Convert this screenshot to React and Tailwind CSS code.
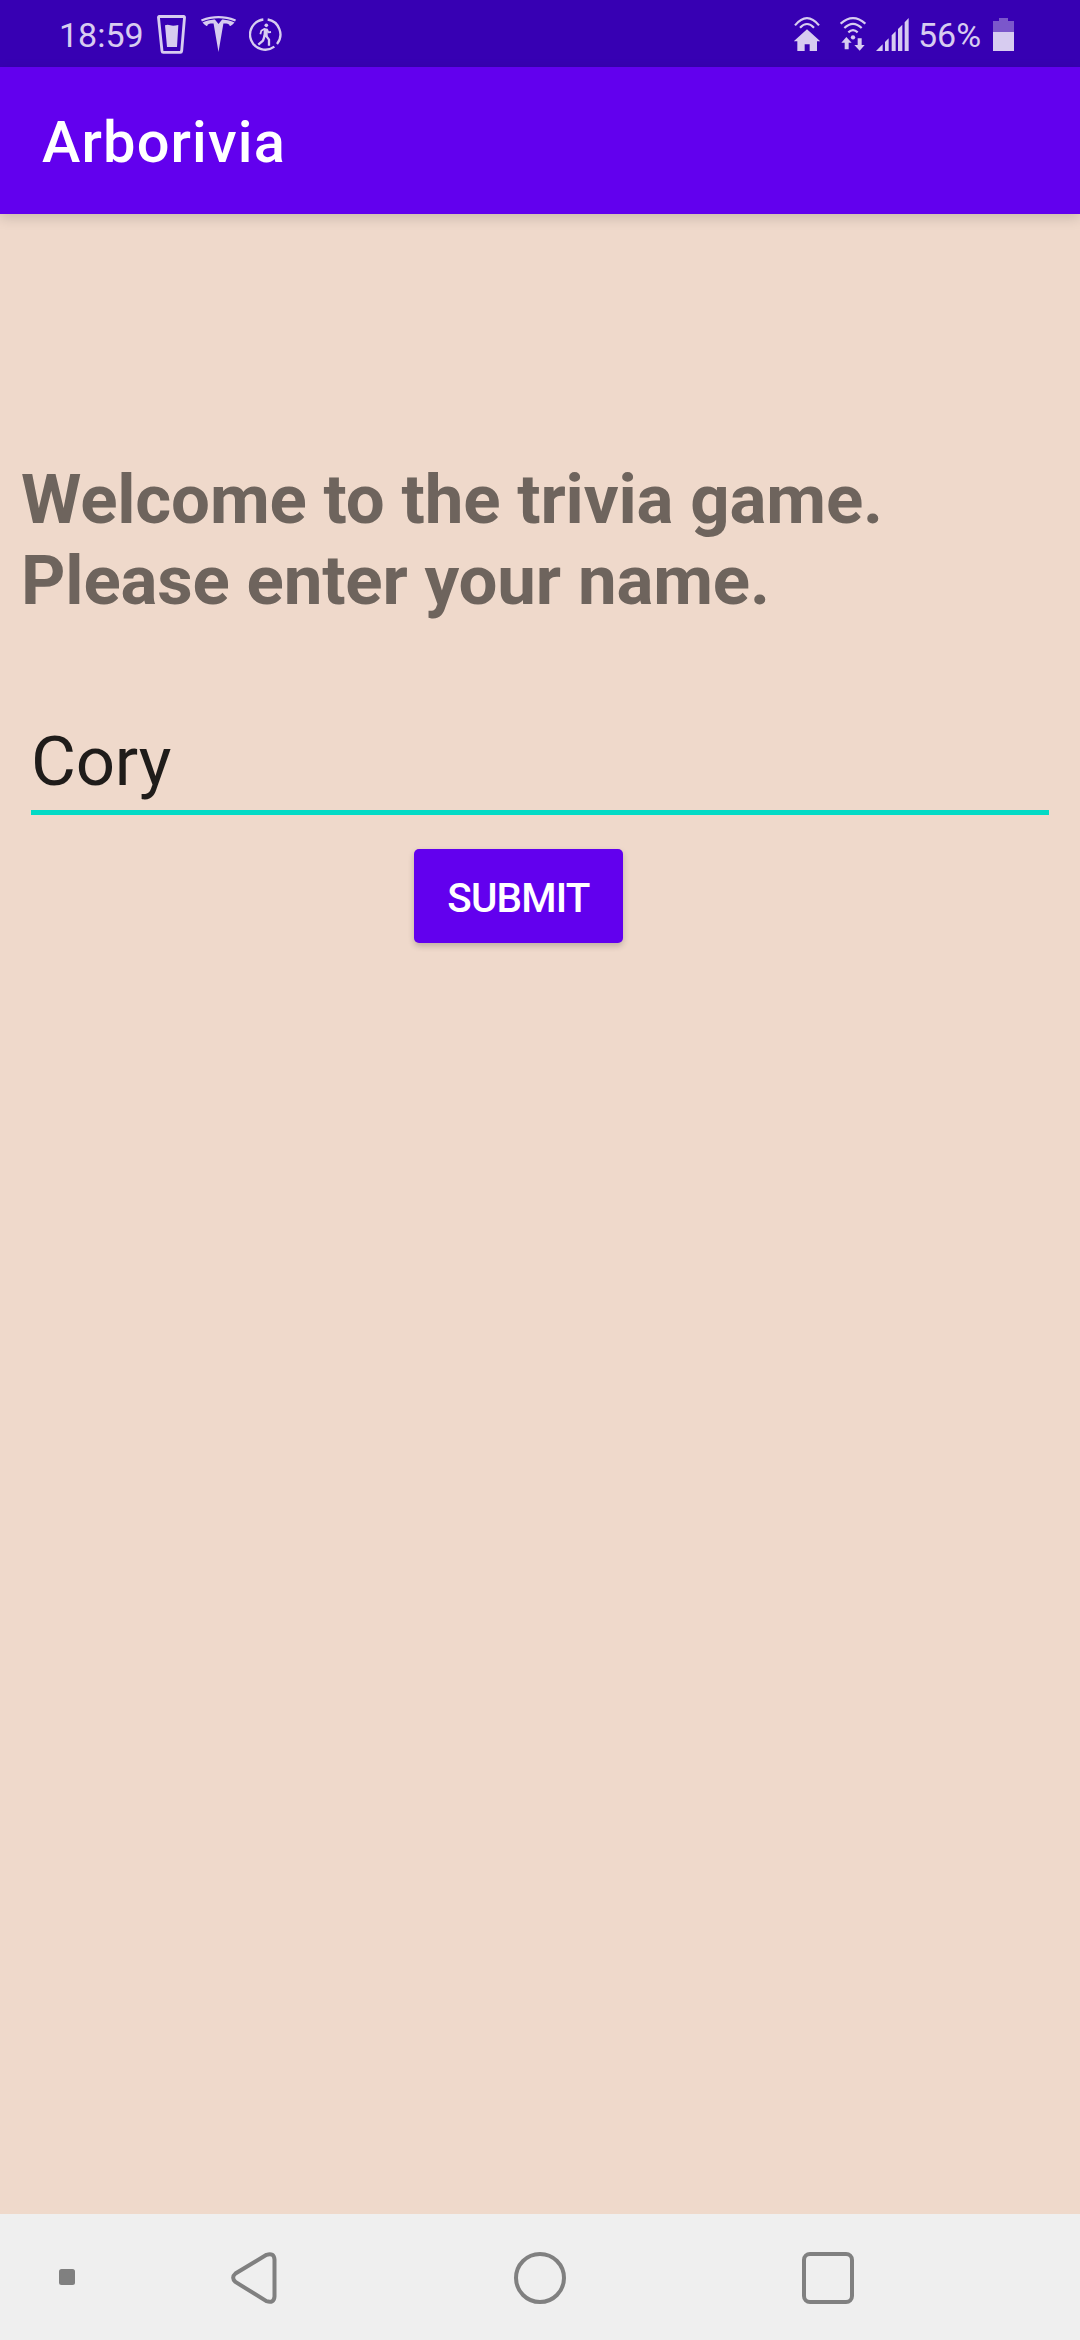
import React from "react";

const tint = "#d7ccf0";

function CupIcon() {
  return (
    <svg className="ml-[15px] mt-[15px] h-[39px] w-[29px] shrink-0" viewBox="0 0 87 117" fill={tint}>
      <path d="M7 4.500H80Q83 4.500 82.500 8L74 108Q73.500 112 70 112H19Q15.500 112 15 108L4.500 8Q4 4.500 7 4.500Z" fill="none" stroke={tint} strokeWidth="8.500" />
      <path d="M24 31Q32 28 40 31T64 30L60 96H30Z" />
    </svg>
  );
}

function TeslaIcon() {
  return (
    <svg className="ml-[15px] mt-[16px] h-[36px] w-[35px] shrink-0" viewBox="0 0 24 24" preserveAspectRatio="none" fill={tint}>
      <path d="M12 5.362l2.475-3.026s4.245.09 8.471 2.054c-1.082 1.636-3.231 2.438-3.231 2.438-.146-1.439-1.154-1.790-4.354-1.790L12 24 8.619 5.034c-3.180 0-4.188.354-4.335 1.792 0 0-2.146-.795-3.229-2.430C5.280 2.431 9.525 2.340 9.525 2.340L12 5.362zM12 1.463c3.415-.030 7.326.528 11.328 2.280.535-.968.672-1.395.672-1.395C19.625.612 15.528.015 12 0 8.472.015 4.375.610 0 2.349c0 0 .195.525.672 1.396C4.674 1.989 8.585 1.435 12 1.463z" />
    </svg>
  );
}

function WalkIcon() {
  return (
    <svg className="ml-[13px] mt-[18px] h-[33px] w-[33px] shrink-0" viewBox="0 0 99 99" fill="none" stroke={tint} strokeWidth="7" strokeLinejoin="round">
      <path d="M56 4.500A45.500 45.500 0 0 1 84 78M76 86A45.500 45.500 0 1 1 43 4.500" />
      <circle cx="52" cy="22" r="5.500" fill={tint} stroke="none" />
      <path d="M45 30L56 32L56 56L43 56Z" fill={tint} stroke="none" />
      <path d="M47 32L37 38L34 49M54 34L58 43L66 42" strokeWidth="5.500" />
      <path d="M47 53L42 68L28 80M51 53L60 65L60 83" strokeWidth="7" />
    </svg>
  );
}

function HomeWifiIcon() {
  return (
    <svg className="mt-[17px] h-[34px] w-[26px] shrink-0" viewBox="0 0 78 102" fill="none" stroke={tint} strokeWidth="6.500">
      <path d="M3 25Q39 -18 75 25M18 32Q39 10 60 32" />
      <path d="M39 37L79 73H69V102H47V82H32V102H10V73H-1Z" fill={tint} stroke="none" />
    </svg>
  );
}

function WifiIcon() {
  return (
    <svg className="ml-[20px] mt-[17px] h-[34px] w-[26px] shrink-0" viewBox="0 0 78 102" fill="none" stroke={tint} strokeWidth="6.500">
      <path d="M2 20Q39 -13 76 20M13 33Q39 8 65 33M25 46Q39 33 53 46" />
      <circle cx="39" cy="61" r="6.500" fill={tint} stroke="none" />
      <path d="M19 60L35 77H26V97H14V77H4ZM53 64H65V84H74L59 101L43 84H53Z" fill={tint} stroke="none" />
    </svg>
  );
}

function SignalIcon() {
  return (
    <svg className="ml-[10px] mt-[18px] h-[33px] w-[33px] shrink-0" viewBox="0 0 99 99" fill={tint}>
      <path d="M0 99L20 79V99ZM27 72L38 61V99H27ZM47 52L59 40V99H47ZM66 33L79 20V99H66ZM86 13L98 0V99H86Z" />
    </svg>
  );
}

function BatteryIcon() {
  return (
    <svg className="mt-[18px] h-[33px] w-[21px] shrink-0" viewBox="0 0 21 33" shapeRendering="crispEdges">
      <path d="M6 0H15V3H21V14H0V3H6Z" fill="#7b57cb" />
      <path d="M0 14H21V33H0Z" fill={tint} />
    </svg>
  );
}

function StatusBar() {
  return (
    <div className="flex h-[67px] shrink-0 items-start bg-[#3700b3] pl-[59px] pr-[66px] text-[34px] leading-[40px] text-[#d7ccf0]">
      <span className="mt-[15px] w-[83px] whitespace-nowrap">18:59</span>
      <CupIcon />
      <TeslaIcon />
      <WalkIcon />
      <div className="ml-auto flex items-start">
        <HomeWifiIcon />
        <WifiIcon />
        <SignalIcon />
        <span className="ml-[9px] mt-[15px] w-[75px] whitespace-nowrap">56%</span>
        <BatteryIcon />
      </div>
    </div>
  );
}

function NavBar() {
  return (
    <nav className="flex h-[126px] shrink-0 items-start bg-[#efefef]">
      <span className="ml-[59px] mt-[55px] size-[16px] rounded-[2.5px] bg-[#808080]" />
      <svg className="ml-[155px] mt-[37px] h-[54px] w-[48px]" viewBox="0 0 48 54" fill="none" stroke="#808080" strokeWidth="4">
        <path d="M36.500 3.800L5.500 22.500Q0.800 26.500 5.500 31L36.500 50.200Q44 52.500 44.500 45.500V8.500Q44 1.500 36.500 3.800Z" />
      </svg>
      <span className="ml-[236px] mt-[38px] size-[52px] rounded-full border-[4px] border-[#808080]" />
      <span className="ml-[236px] mt-[38px] size-[52px] rounded-[8px] border-[4px] border-[#808080]" />
    </nav>
  );
}

export default function App() {
  return (
    <div className="flex h-[2340px] w-[1080px] flex-col overflow-hidden bg-[#efd9cb] font-['Roboto',sans-serif]">
      <StatusBar />
      <header className="flex h-[147px] shrink-0 items-center bg-[#6200ee] pl-[42px] pt-[3px] shadow-[0_4px_12px_rgba(0,0,0,0.15)]">
        <h1 className="text-[57.75px] font-medium leading-[68px] tracking-[0.02em] text-white">Arborivia</h1>
      </header>
      <main className="flex grow flex-col pt-[245px]">
        <p className="pl-[21px] text-[69px] font-bold leading-[81px] tracking-[-0.17px] text-[#6e645d]">
          Welcome to the trivia game.
          <br />
          Please enter your name.
        </p>
        <input
          className="mx-[31px] mt-[100px] h-[94px] border-b-[5px] border-[#03dac5] bg-transparent pb-[8px] text-[69px] leading-[81px] tracking-[-0.2px] text-[#1f1c1a] outline-none"
          defaultValue="Cory"
        />
        <button className="ml-[414px] mt-[34px] h-[94px] w-[209px] rounded-[5px] bg-[#6200ee] pt-[4px] text-center text-[40.4px] font-medium leading-[47px] tracking-[-0.8px] text-white shadow-[0_3px_6px_rgba(0,0,0,0.2)]">
          SUBMIT
        </button>
      </main>
      <NavBar />
    </div>
  );
}
